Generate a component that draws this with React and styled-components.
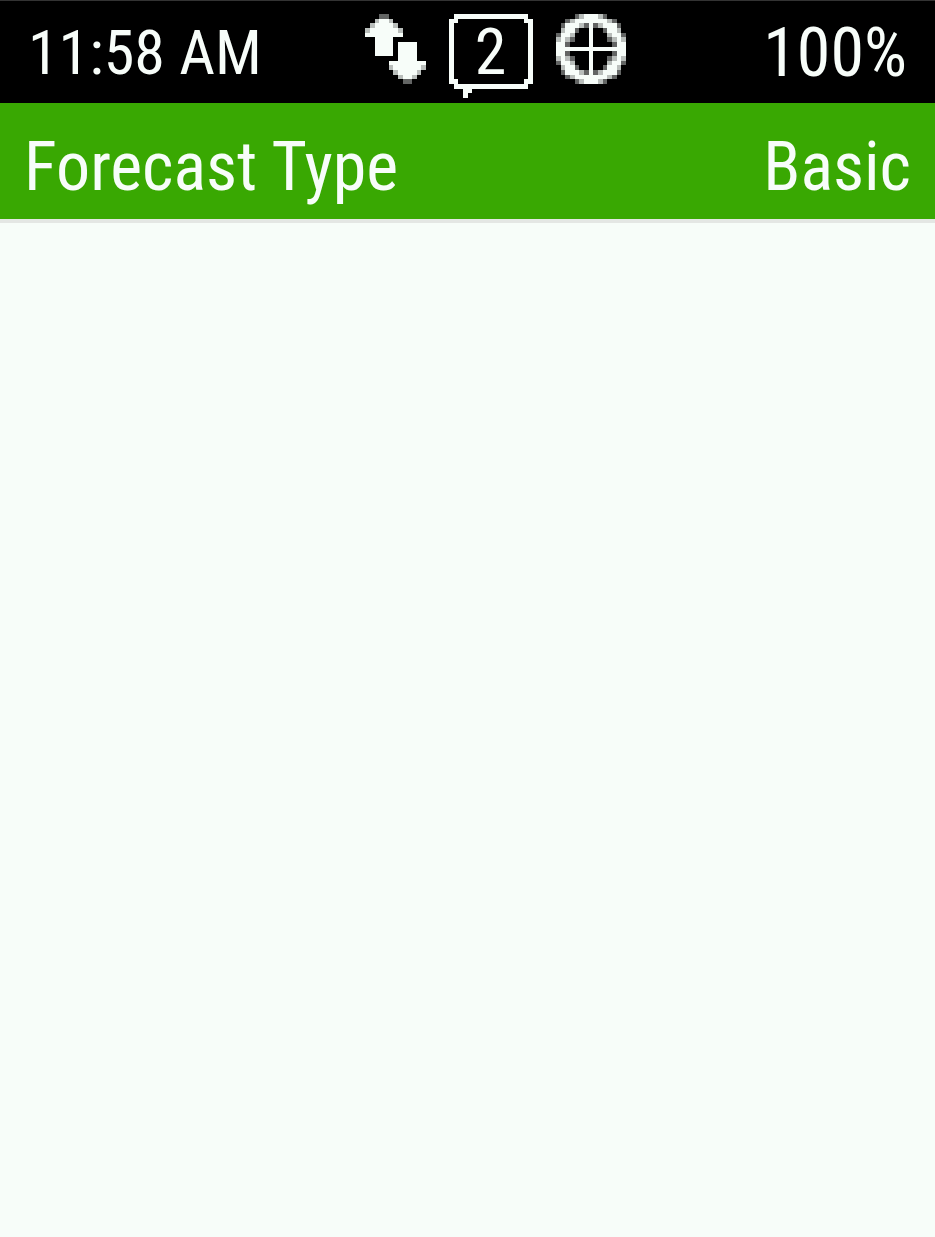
import React from "react";
import styled, { createGlobalStyle } from "styled-components";

const GlobalStyle = createGlobalStyle`
  body {
    margin: 0;
    background-color: #f7fdf9;
    color: #f7fdf9;
    font-family: "Roboto Condensed", "DejaVu Sans Condensed", sans-serif;
  }
`;

const Screen = styled.div`
  box-sizing: border-box;
  min-height: 100vh;
  border-top: 1px solid #333333;
`;

const StatusBar = styled.header`
  display: grid;
  grid-template-columns: 39% 1fr auto;
  background-color: #000000;
  height: 102px;
  font-size: 64px;
  line-height: 104px;
`;

const Time = styled.time`
  padding-left: 28px;
  font-size: 62px;
`;

const Battery = styled.span`
  padding-right: 28px;
  font-size: 68px;
`;

const StatusIcons = styled.div`
  display: flex;
  align-items: flex-start;
  gap: 23px;
  padding-top: 13px;
`;

const IconSvg = styled.svg`
  display: block;
  flex: none;
  fill: #f7fdf9;
`;

const MessageBadge = styled.div`
  position: relative;
`;

const MessageCount = styled.span`
  position: absolute;
  inset: 0;
  line-height: 78px;
  text-align: center;
`;

const TitleBar = styled.main`
  display: flex;
  justify-content: space-between;
  padding: 12px 24px 0;
  background-color: #39a802;
  border-bottom: 4px solid #e4e7e4;
  font-size: 68px;
  line-height: 104px;
`;

const Title = styled.h1`
  margin: 0;
  font-size: inherit;
  font-weight: 400;
`;

// "#" is solid, "+" and "-" are the softer edge cells
const opacities = { "#": 1, "+": 0.75, "-": 0.4 };

const arrows = [
  "...--........",
  "..+##+.......",
  ".+####+......",
  "+######+.....",
  "########.....",
  "..####.......",
  "..####.####..",
  "..####.####..",
  "..####.####..",
  ".......####..",
  ".....########",
  ".....+######+",
  "......+####+.",
  ".......+##+..",
  "........--...",
];

const bubble = [
  ".################.",
  "##..............##",
  ...Array(12).fill("#................#"),
  "##..............##",
  ".################.",
  "...##.............",
  "...#..............",
];

const globe = [
  "....-+###+-....",
  "..-+#######+-..",
  ".-###+-#-+###-.",
  ".+##-..#..-##+.",
  "-##+...#...+##-",
  "+#+-...#...-+#+",
  "##-....#....-##",
  "###############",
  "##-....#....-##",
  "+#+-...#...-+#+",
  "-##+...#...+##-",
  ".+##-..#..-##+.",
  ".-###+-#-+###-.",
  "..-+#######+-..",
  "....-+###+-....",
];

const PixelIcon = ({ rows, width, height, label }) => (
  <IconSvg
    width={width}
    height={height}
    viewBox={`0 0 ${rows[0].length} ${rows.length}`}
    shapeRendering="crispEdges"
    role="img"
    aria-label={label}
  >
    {rows.map((row, y) =>
      [...row].map(
        (cell, x) =>
          opacities[cell] && (
            <rect
              key={`${x}-${y}`}
              x={x}
              y={y}
              width="1"
              height="1"
              opacity={opacities[cell]}
            />
          )
      )
    )}
  </IconSvg>
);

const App = () => (
  <>
    <GlobalStyle />
    <Screen>
      <StatusBar>
        <Time>11:58 AM</Time>
        <StatusIcons>
          <PixelIcon rows={arrows} width={61} height={70} label="Data" />
          <MessageBadge>
            <PixelIcon rows={bubble} width={84} height={84} label="Messages" />
            <MessageCount>2</MessageCount>
          </MessageBadge>
          <PixelIcon rows={globe} width={70} height={70} label="Location" />
        </StatusIcons>
        <Battery>100%</Battery>
      </StatusBar>
      <TitleBar>
        <Title>Forecast Type</Title>
        <span>Basic</span>
      </TitleBar>
    </Screen>
  </>
);

export default App;
